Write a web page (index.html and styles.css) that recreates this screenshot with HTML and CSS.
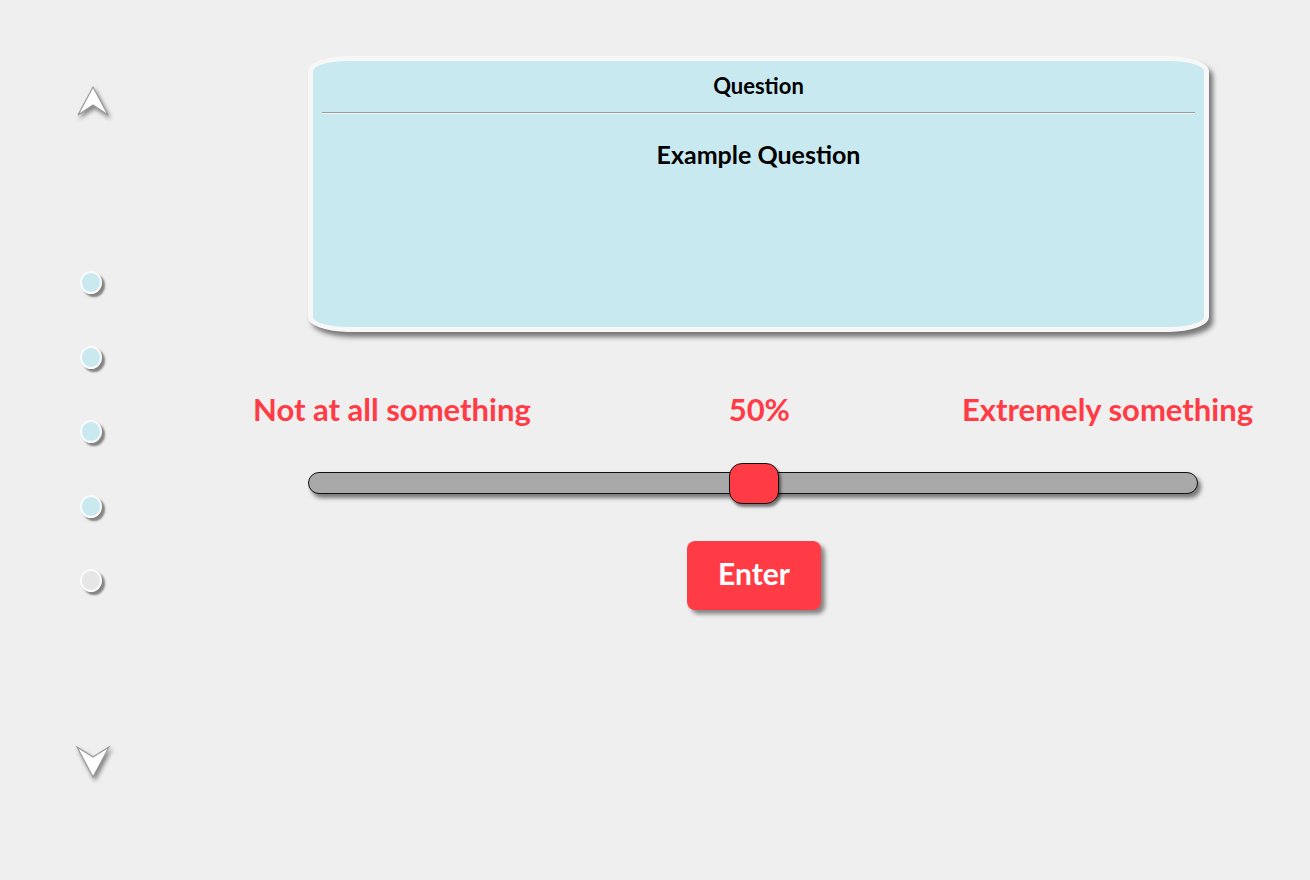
FILE: index.html
```html
<!DOCTYPE html>
<html>
<head>
<meta charset="utf-8">
<link rel="stylesheet" href="styles.css">
</head>
<body>
<div class="page">
  <nav class="nav">
    <svg class="arrow arrow-up" width="40" height="40" viewBox="0 0 40 40">
      <path d="M20 4 L35 32 L20 22 L5 32 Z" fill="#fff" stroke="#9a9a9a" stroke-width="1.2" stroke-linejoin="miter"/>
    </svg>
    <div class="dots">
      <span class="dot"></span>
      <span class="dot"></span>
      <span class="dot"></span>
      <span class="dot"></span>
      <span class="dot dot-off"></span>
    </div>
    <svg class="arrow arrow-down" width="40" height="40" viewBox="0 0 40 40">
      <path d="M4 5 L20 15 L36 5 L20 35 Z" fill="#fff" stroke="#9a9a9a" stroke-width="1.2" stroke-linejoin="miter"/>
    </svg>
  </nav>
  <main class="main">
    <section class="card">
      <div class="card-title">Question</div>
      <hr class="card-rule">
      <div class="card-question">Example Question</div>
    </section>
    <div class="labels">
      <span class="label">Not at all something</span>
      <span class="label label-value">50%</span>
      <span class="label">Extremely something</span>
    </div>
    <div class="slider">
      <div class="track"></div>
      <div class="thumb"></div>
    </div>
    <button class="enter">Enter</button>
  </main>
</div>
</body>
</html>
```
FILE: styles.css
```css
html, body {
  margin: 0;
  padding: 0;
  background: #efefef;
}
body {
  font-family: "Lato", "Noto Sans", sans-serif;
  width: 1310px;
  height: 880px;
  overflow: hidden;
}
.page {
  display: flex;
  flex-direction: row;
}
.nav {
  width: 186px;
  display: flex;
  flex-direction: column;
  align-items: center;
  padding-top: 83px;
}
.arrow {
  display: block;
  filter: drop-shadow(2px 3px 2px rgba(0,0,0,0.45));
}
.dots {
  display: flex;
  flex-direction: column;
  align-items: center;
  gap: 51.5px;
  margin-top: 148px;
  margin-right: 5px;
}
.dot {
  display: block;
  width: 22px;
  height: 23px;
  box-sizing: border-box;
  border: 2px solid #fafafa;
  border-radius: 50%;
  background: #c9e9f1;
  box-shadow: 3px 3px 2px rgba(0,0,0,0.45);
}
.dot-off {
  background: #e6e6e6;
}
.arrow-down {
  margin-top: 150px;
}
.main {
  flex: 1;
  display: flex;
  flex-direction: column;
  align-items: flex-start;
}
.card {
  margin-top: 56px;
  margin-left: 122px;
  width: 901px;
  height: 276px;
  box-sizing: border-box;
  border: 5px solid #f7f7f7;
  border-radius: 40px / 15px;
  background: #c9e9f1;
  box-shadow: 4px 5px 5px rgba(0,0,0,0.5);
  padding: 12px 9px 0;
  text-align: center;
  color: #000;
}
.card-title {
  font-weight: 700;
  font-size: 22px;
  line-height: 26px;
}
.card-rule {
  margin: 13px 0 0;
  height: 0;
  border: 0;
  border-top: 1px solid #9a9a9a;
  border-bottom: 1px solid #eef6f8;
}
.card-question {
  margin-top: 26px;
  font-weight: 700;
  font-size: 25px;
  line-height: 28px;
}
.labels {
  margin-top: 60px;
  margin-left: 67px;
  width: 1000px;
  display: flex;
  justify-content: space-between;
  color: #ff3b45;
  font-weight: 700;
  font-size: 31px;
  line-height: 34px;
}
.label-value {
  margin-left: 26px;
}
.slider {
  position: relative;
  margin-top: 36px;
  margin-left: 122px;
  width: 890px;
  height: 42px;
  display: flex;
  align-items: center;
}
.track {
  width: 100%;
  height: 22px;
  box-sizing: border-box;
  border: 1px solid #111;
  border-radius: 11px;
  background: #a9a9a9;
  box-shadow: 3px 4px 4px rgba(0,0,0,0.5);
}
.thumb {
  position: absolute;
  top: 1px;
  left: calc(50% - 24px);
  width: 50px;
  height: 41px;
  box-sizing: border-box;
  border: 1.5px solid #111;
  border-radius: 13px;
  background: #ff3b45;
  box-shadow: 2px 3px 3px rgba(0,0,0,0.5);
}
.enter {
  margin-top: 37px;
  margin-left: 501px;
  width: 134px;
  height: 69px;
  border: 0;
  border-radius: 8px;
  background: #ff3b45;
  color: #fff;
  font-family: "Lato", "Noto Sans", sans-serif;
  font-weight: 700;
  font-size: 30px;
  padding: 0 0 6px;
  box-shadow: 4px 4px 4px rgba(0,0,0,0.45);
}
```
